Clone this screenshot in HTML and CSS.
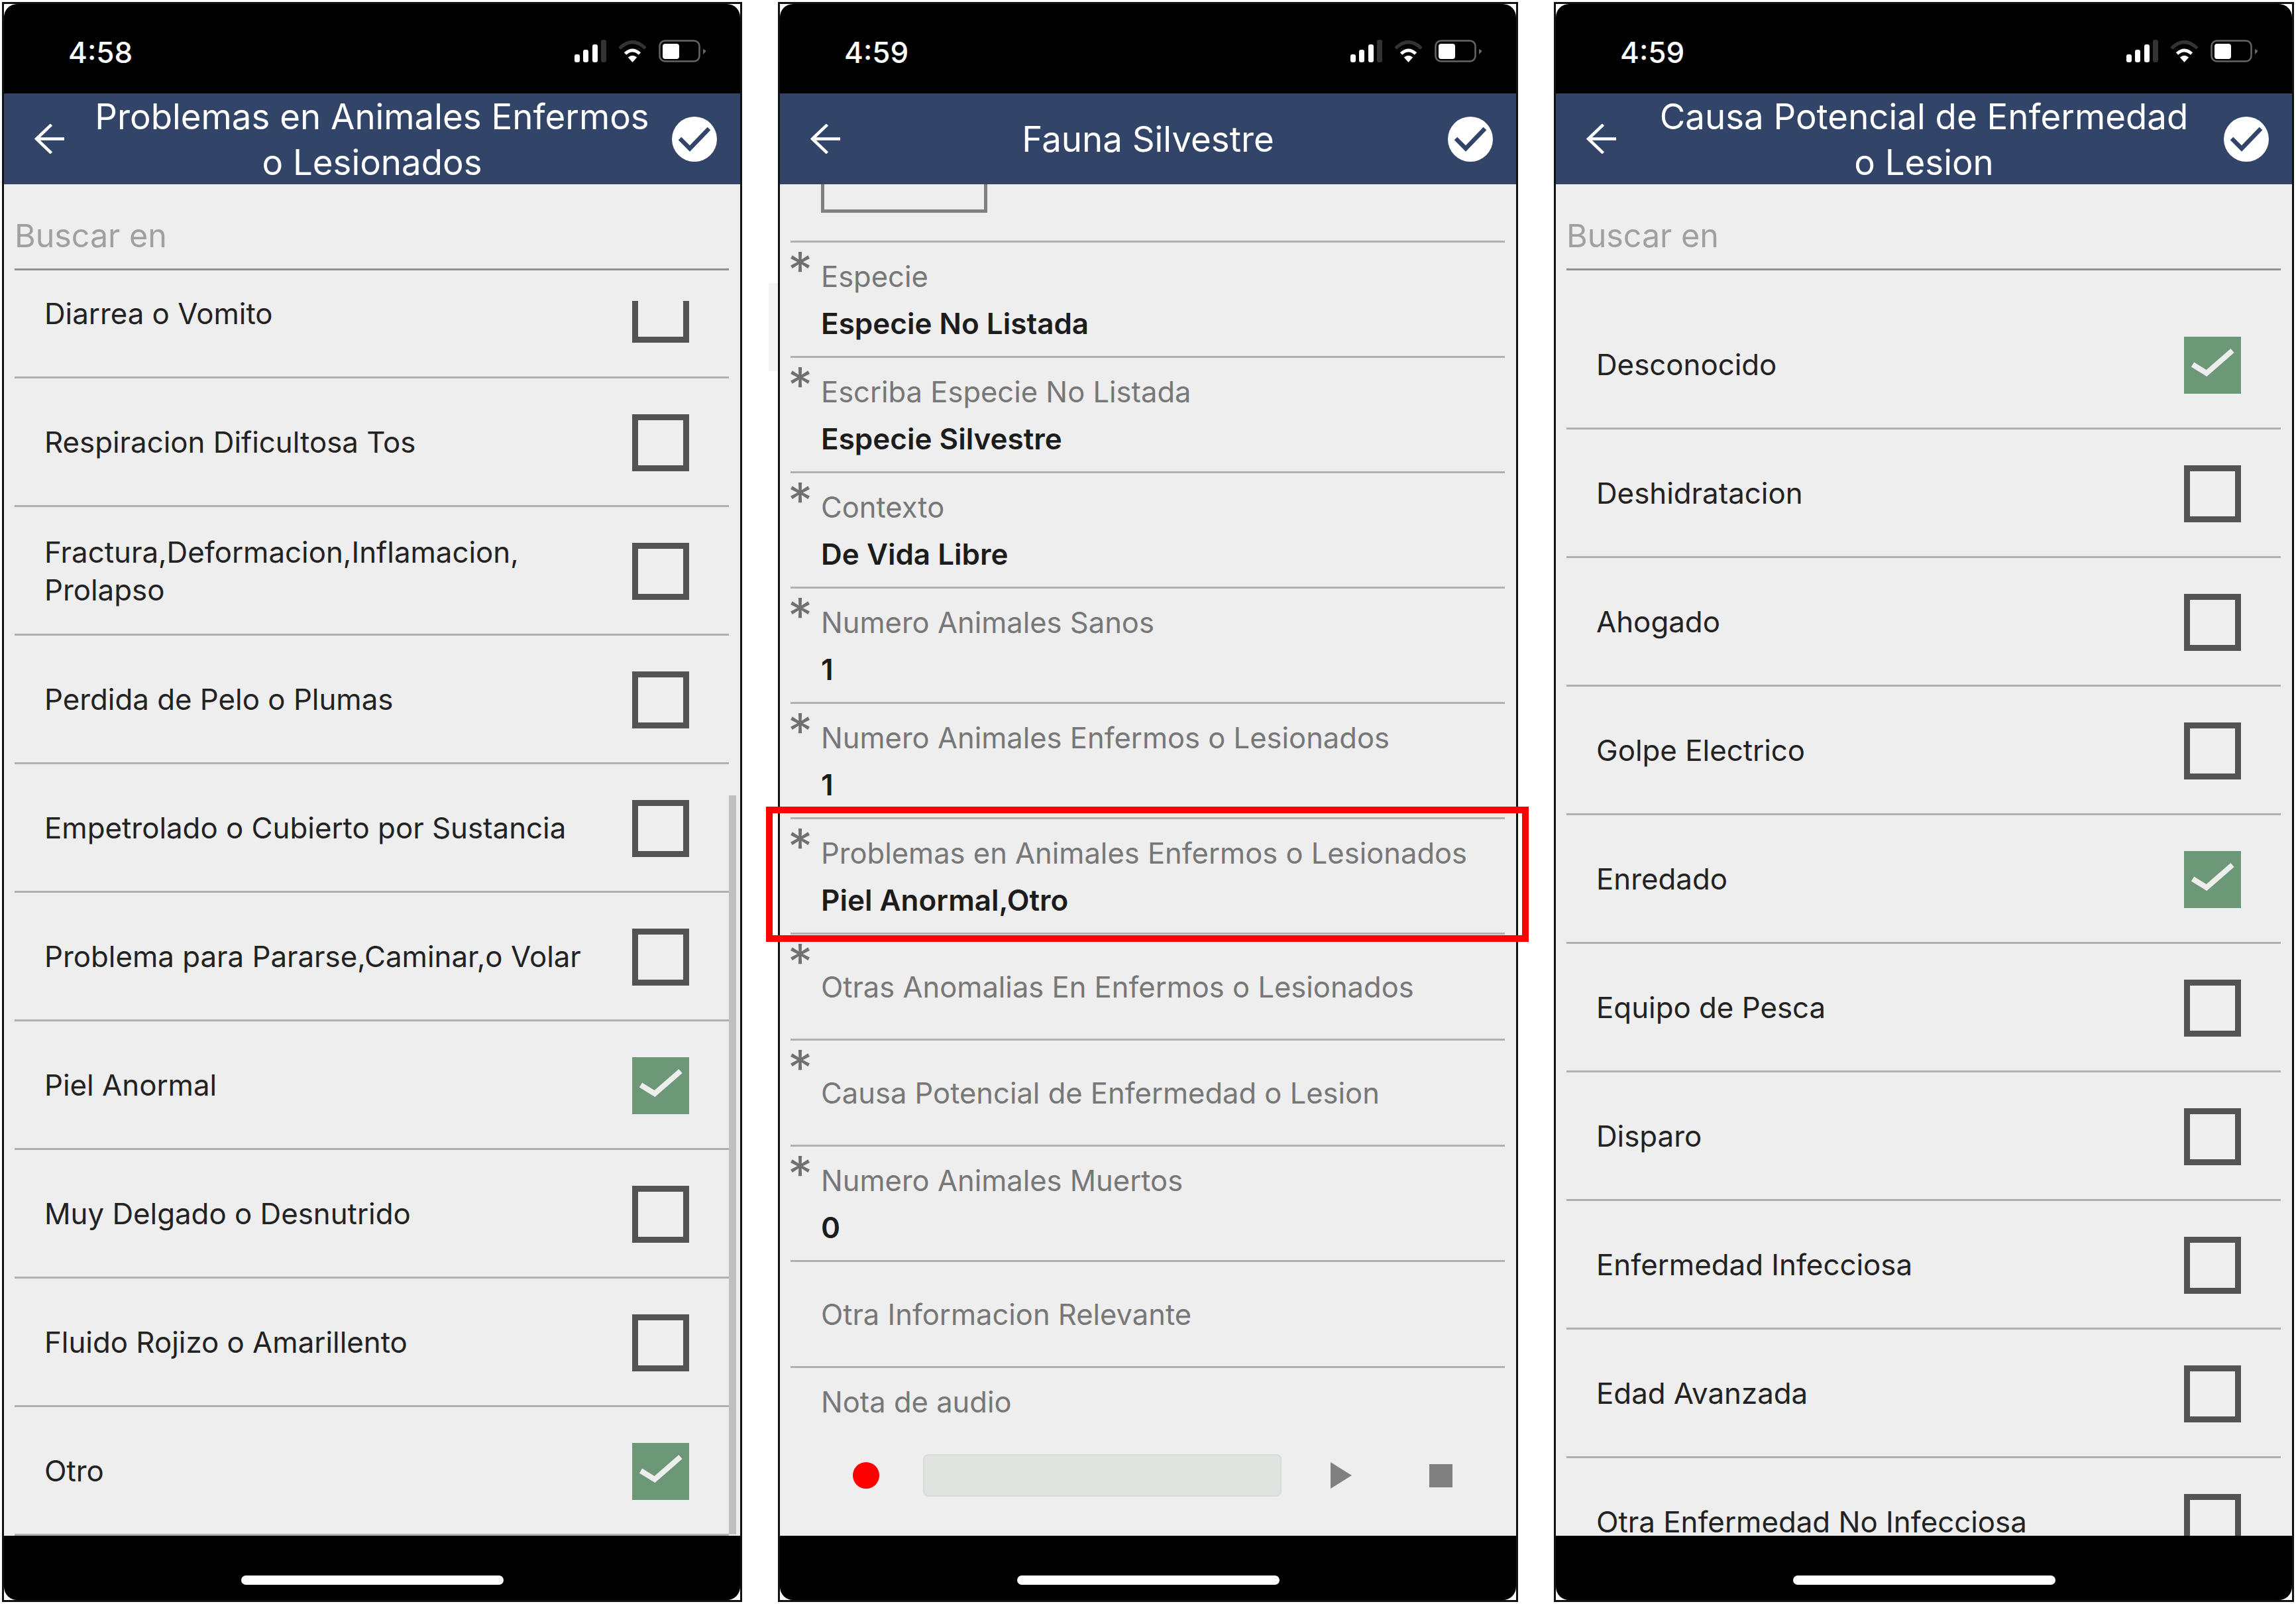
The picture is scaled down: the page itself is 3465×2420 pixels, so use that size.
FILE: index.html
```html
<!DOCTYPE html>
<html lang="es">
<head>
    <meta charset="UTF-8">
    <title>Fauna Silvestre</title>
    <link rel="stylesheet" href="styles.css">
</head>
<body>
    <svg class="defs" width="0" height="0">
        <symbol id="signal" viewBox="0 0 48 34">
            <rect x="0" y="22" width="8" height="12" rx="3" fill="#fff"/>
            <rect x="13" y="15" width="8" height="19" rx="3" fill="#fff"/>
            <rect x="27" y="7" width="8" height="27" rx="3" fill="#fff"/>
            <rect x="40" y="0" width="8" height="34" rx="3" fill="#333"/>
        </symbol>
        <symbol id="wifi" viewBox="0 0 47 34">
            <path d="M4 13 Q23.5 -6 43 13" fill="none" stroke="#333" stroke-width="5"/>
            <path d="M12.5 21 Q23.5 11 34.5 21" fill="none" stroke="#fff" stroke-width="5"/>
            <path d="M23.5 34 L16.8 26.5 Q23.5 21 30.2 26.5Z" fill="#fff"/>
        </symbol>
        <symbol id="battery" viewBox="0 0 71 34">
            <rect x="1.5" y="1.5" width="60" height="31" rx="8" fill="none" stroke="#666" stroke-width="2.5"/>
            <rect x="6" y="6" width="25" height="23" rx="4" fill="#fff"/>
            <path d="M67 14 L71 16 V18 L67 22Z" fill="#666"/>
        </symbol>
        <symbol id="back" viewBox="0 0 45 45">
            <path d="M45 22.5 H3 M25.5 1 L3 22.5 L25.5 44" fill="none" stroke="#fff" stroke-width="4.5"/>
        </symbol>
        <symbol id="done" viewBox="0 0 68 68">
            <circle cx="34" cy="34" r="34" fill="#fff"/>
            <path d="M12 33 L27 48 L56 18" fill="none" stroke="#324467" stroke-width="6.5"/>
        </symbol>
        <symbol id="tick" viewBox="0 0 86 86">
            <rect width="86" height="86" fill="#6c9878"/>
            <path d="M13 42 L34 55 L73 21" fill="none" stroke="#eee" stroke-width="8"/>
        </symbol>
    </svg>

    <div class="phones">

        <!-- pantalla 1 -->
        <div class="phone">
            <div class="screen">
                <div class="status">
                    <span class="time">4:58</span>
                    <svg class="ic-signal"><use href="#signal"/></svg>
                    <svg class="ic-wifi"><use href="#wifi"/></svg>
                    <svg class="ic-battery"><use href="#battery"/></svg>
                </div>
                <div class="header">
                    <div class="back"><svg class="ic-back"><use href="#back"/></svg></div>
                    <div class="title">Problemas en Animales Enfermos<br>o Lesionados</div>
                    <svg class="ic-done"><use href="#done"/></svg>
                </div>
                <div class="content">
                    <div class="scrollbar"></div>
                    <div class="search">Buscar en</div>
                    <div class="row row-cut"><span class="row-text">Diarrea o Vomito</span><span class="box box-cut"></span></div>
                    <div class="row"><span class="row-text">Respiracion Dificultosa Tos</span><span class="box"></span></div>
                    <div class="row"><span class="row-text">Fractura,Deformacion,Inflamacion,<br>Prolapso</span><span class="box"></span></div>
                    <div class="row"><span class="row-text">Perdida de Pelo o Plumas</span><span class="box"></span></div>
                    <div class="row"><span class="row-text">Empetrolado o Cubierto por Sustancia</span><span class="box"></span></div>
                    <div class="row"><span class="row-text">Problema para Pararse,Caminar,o Volar</span><span class="box"></span></div>
                    <div class="row"><span class="row-text">Piel Anormal</span><svg class="box-on"><use href="#tick"/></svg></div>
                    <div class="row"><span class="row-text">Muy Delgado o Desnutrido</span><span class="box"></span></div>
                    <div class="row"><span class="row-text">Fluido Rojizo o Amarillento</span><span class="box"></span></div>
                    <div class="row"><span class="row-text">Otro</span><svg class="box-on"><use href="#tick"/></svg></div>
                </div>
                <div class="footer"><div class="home"></div></div>
            </div>
        </div>

        <!-- pantalla 2 -->
        <div class="phone phone-marked">
            <div class="screen">
                <div class="status">
                    <span class="time">4:59</span>
                    <svg class="ic-signal"><use href="#signal"/></svg>
                    <svg class="ic-wifi"><use href="#wifi"/></svg>
                    <svg class="ic-battery"><use href="#battery"/></svg>
                </div>
                <div class="header">
                    <div class="back"><svg class="ic-back"><use href="#back"/></svg></div>
                    <div class="title">Fauna Silvestre</div>
                    <svg class="ic-done"><use href="#done"/></svg>
                </div>
                <div class="content">
                    <div class="photo-row"><div class="photo"></div></div>
                    <div class="field"><span class="star">*</span><div><div class="label">Especie</div><div class="value">Especie No Listada</div></div></div>
                    <div class="field"><span class="star">*</span><div><div class="label">Escriba Especie No Listada</div><div class="value">Especie Silvestre</div></div></div>
                    <div class="field"><span class="star">*</span><div><div class="label">Contexto</div><div class="value">De Vida Libre</div></div></div>
                    <div class="field"><span class="star">*</span><div><div class="label">Numero Animales Sanos</div><div class="value">1</div></div></div>
                    <div class="field"><span class="star">*</span><div><div class="label">Numero Animales Enfermos o Lesionados</div><div class="value">1</div></div></div>
                    <div class="field highlighted"><span class="star">*</span><div><div class="label">Problemas en Animales Enfermos o Lesionados</div><div class="value">Piel Anormal,Otro</div></div></div>
                    <div class="field field-empty"><span class="star">*</span><div><div class="label">Otras Anomalias En Enfermos o Lesionados</div></div></div>
                    <div class="field field-empty"><span class="star">*</span><div><div class="label">Causa Potencial de Enfermedad o Lesion</div></div></div>
                    <div class="field"><span class="star">*</span><div><div class="label">Numero Animales Muertos</div><div class="value">0</div></div></div>
                    <div class="field field-empty"><span class="star"></span><div><div class="label">Otra Informacion Relevante</div></div></div>
                    <div class="field field-audio"><span class="star"></span><div>
                        <div class="label">Nota de audio</div>
                        <div class="audio">
                            <span class="rec"></span>
                            <span class="track"></span>
                            <span class="play"></span>
                            <span class="stop"></span>
                        </div>
                    </div></div>
                </div>
                <div class="footer"><div class="home"></div></div>
            </div>
        </div>

        <!-- pantalla 3 -->
        <div class="phone">
            <div class="screen">
                <div class="status">
                    <span class="time">4:59</span>
                    <svg class="ic-signal"><use href="#signal"/></svg>
                    <svg class="ic-wifi"><use href="#wifi"/></svg>
                    <svg class="ic-battery"><use href="#battery"/></svg>
                </div>
                <div class="header">
                    <div class="back"><svg class="ic-back"><use href="#back"/></svg></div>
                    <div class="title">Causa Potencial de Enfermedad<br>o Lesion</div>
                    <svg class="ic-done"><use href="#done"/></svg>
                </div>
                <div class="content">
                    <div class="search">Buscar en</div>
                    <div class="spacer"></div>
                    <div class="row"><span class="row-text">Desconocido</span><svg class="box-on"><use href="#tick"/></svg></div>
                    <div class="row"><span class="row-text">Deshidratacion</span><span class="box"></span></div>
                    <div class="row"><span class="row-text">Ahogado</span><span class="box"></span></div>
                    <div class="row"><span class="row-text">Golpe Electrico</span><span class="box"></span></div>
                    <div class="row"><span class="row-text">Enredado</span><svg class="box-on"><use href="#tick"/></svg></div>
                    <div class="row"><span class="row-text">Equipo de Pesca</span><span class="box"></span></div>
                    <div class="row"><span class="row-text">Disparo</span><span class="box"></span></div>
                    <div class="row"><span class="row-text">Enfermedad Infecciosa</span><span class="box"></span></div>
                    <div class="row"><span class="row-text">Edad Avanzada</span><span class="box"></span></div>
                    <div class="row"><span class="row-text">Otra Enfermedad No Infecciosa</span><span class="box"></span></div>
                </div>
                <div class="footer"><div class="home"></div></div>
            </div>
        </div>

    </div>
</body>
</html>
```

FILE: styles.css
```css
* {
    box-sizing: border-box;
}

body {
    margin: 0;
    background-color: #fff;
    font-family: Inter, "Liberation Sans", sans-serif;
}

.defs {
    position: absolute;
}

.phones {
    display: flex;
    gap: 54px;
    padding: 3px 0 0 3px;
}

.phone {
    width: 1117px;
    height: 2414px;
    border: 3px solid #111;
    background-color: #fff;
}

/* resto gris claro a la izquierda de la pantalla 2 */
.phone-marked {
    position: relative;
}

.phone-marked::before {
    content: "";
    position: absolute;
    left: -17px;
    top: 421px;
    width: 14px;
    height: 133px;
    background-color: #f4f4f4;
}

.screen {
    height: 100%;
    display: flex;
    flex-direction: column;
}

/* barra de estado */
.status {
    height: 135px;
    flex: none;
    display: flex;
    align-items: flex-start;
    padding: 54px 0 0 97px;
    background-color: #000;
    border-radius: 20px 20px 0 0;
}

.time {
    flex: 1;
    margin-top: -3px;
    color: #fff;
    font-size: 44px;
    line-height: 44px;
    font-weight: 500;
}

.ic-signal {
    width: 48px;
    height: 34px;
    margin-right: 16px;
}

.ic-wifi {
    width: 47px;
    height: 34px;
    margin-right: 16px;
}

.ic-battery {
    width: 71px;
    height: 34px;
    margin-right: 52px;
}

/* cabecera */
.header {
    height: 137px;
    flex: none;
    display: flex;
    align-items: center;
    background-color: #324467;
    color: #fff;
}

.back {
    width: 103px;
    padding-left: 46px;
    flex: none;
}

.ic-back {
    display: block;
    width: 45px;
    height: 45px;
}

.title {
    flex: 1;
    padding-top: 2px;
    text-align: center;
    font-size: 52.8px;
    line-height: 69px;
}

.ic-done {
    width: 68px;
    height: 68px;
    margin-right: 35px;
    flex: none;
}

/* contenido */
.content {
    height: 2039px;
    flex: none;
    position: relative;
    overflow: hidden;
    background-color: #eee;
    padding: 0 17px 0 16px;
}

.scrollbar {
    position: absolute;
    right: 6px;
    top: 922px;
    bottom: 2px;
    width: 11px;
    background-color: #c0c0c0;
}

.search {
    height: 130px;
    padding-top: 48px;
    border-bottom: 3px solid #909090;
    color: #a0a0a0;
    font-size: 48.4px;
    line-height: 60px;
}

.spacer {
    height: 46px;
}

.row {
    height: 194px;
    display: flex;
    align-items: center;
    justify-content: space-between;
    padding: 3px 60px 0 45px;
    border-bottom: 3px solid #b0b0b0;
    color: #222;
    font-size: 43.8px;
    line-height: 57px;
}

.row-text {
    margin-top: -1px;
}

.row-cut {
    height: 163px;
    padding-top: 0;
    align-items: flex-start;
}

.row-cut .row-text {
    margin-top: 37px;
}

.box {
    width: 86px;
    height: 86px;
    flex: none;
    border: 9px solid #535353;
}

.box-cut {
    height: 63px;
    margin-top: 46px;
    border-top: none;
}

.box-on {
    width: 86px;
    height: 86px;
    flex: none;
}

/* formulario */
.photo-row {
    height: 88px;
    padding-left: 46px;
    border-bottom: 3px solid #b0b0b0;
}

.photo {
    width: 251px;
    height: 43px;
    border: 5px solid #808080;
    border-top: none;
}

.field {
    height: 174px;
    display: grid;
    grid-template-columns: 46px 1fr;
    border-bottom: 3px solid #b0b0b0;
}

.field-empty {
    height: 160px;
}

.field-audio {
    height: 254px;
    border-bottom: none;
}

.star {
    margin-left: -4px;
    padding-top: 4px;
    color: #707070;
    font-size: 74px;
    line-height: 74px;
}

.label {
    padding-top: 26px;
    color: #777;
    font-size: 43.5px;
    line-height: 50px;
}

.field-empty .label {
    padding-top: 54px;
}

.value {
    padding-top: 21px;
    color: #1c1c1c;
    font-size: 44px;
    line-height: 50px;
    font-weight: 600;
}

.audio {
    display: flex;
    align-items: center;
    height: 64px;
    margin-top: 54px;
}

.rec {
    width: 40px;
    height: 40px;
    margin-left: 48px;
    border-radius: 50%;
    background-color: #f00;
}

.track {
    width: 541px;
    height: 64px;
    margin-left: 66px;
    background-color: #e0e4e1;
    border: 2px solid #dadada;
    border-radius: 8px;
}

.play {
    width: 0;
    height: 0;
    margin-left: 74px;
    border-left: 32px solid #808080;
    border-top: 20px solid transparent;
    border-bottom: 20px solid transparent;
}

.stop {
    width: 35px;
    height: 35px;
    margin-left: 117px;
    background-color: #808080;
}

/* marco rojo sobre el campo */
.highlighted {
    position: relative;
}

.highlighted::after {
    content: "";
    position: absolute;
    left: -37px;
    right: -36px;
    top: -19px;
    bottom: -14px;
    border: 10px solid #f00;
}

.content:has(.highlighted) {
    overflow: visible;
}

/* barra inferior */
.footer {
    flex: 1;
    display: flex;
    justify-content: center;
    padding-top: 60px;
    background-color: #000;
    border-radius: 0 0 20px 20px;
}

.home {
    width: 396px;
    height: 14px;
    border-radius: 7px;
    background-color: #fff;
}
```
